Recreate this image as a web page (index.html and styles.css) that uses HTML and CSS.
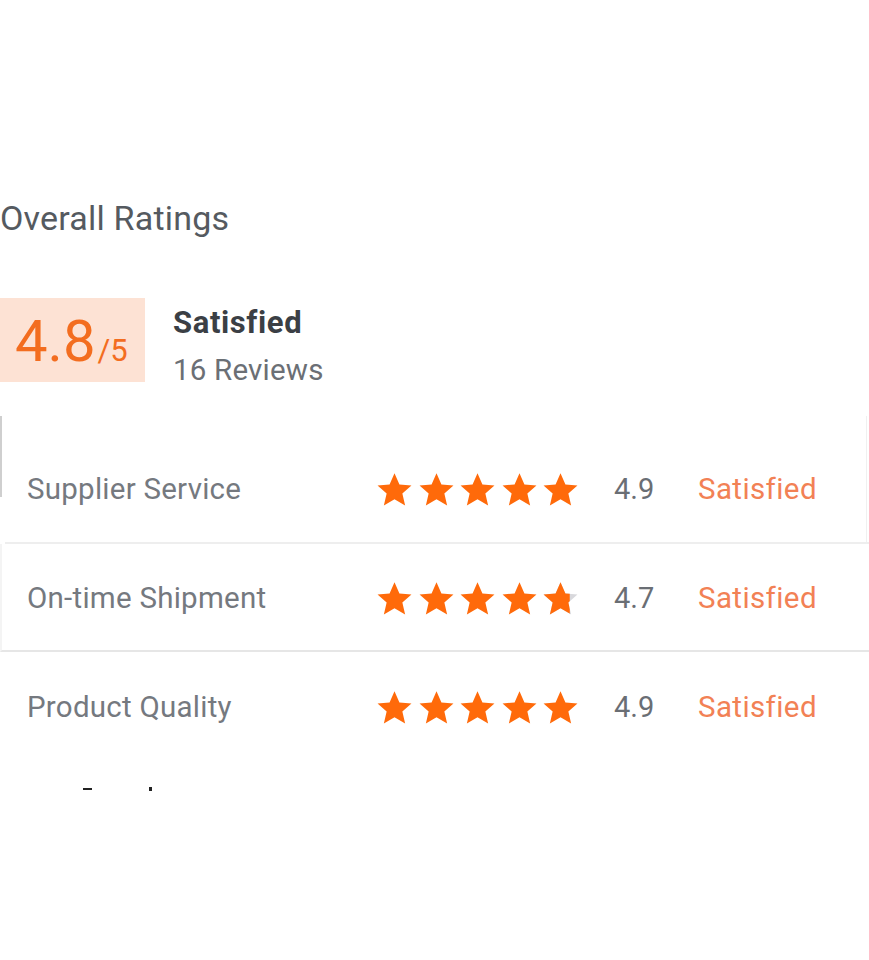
FILE: index.html
```html
<!DOCTYPE html>
<html>
<head>
<meta charset="utf-8">
<link rel="stylesheet" href="styles.css">
</head>
<body>
<div class="page">
  <h2 class="title">Overall Ratings</h2>
  <div class="summary">
    <div class="score"><span class="big">4.8</span><span class="small">/5</span></div>
    <div class="summary-text">
      <div class="sat">Satisfied</div>
      <div class="reviews">16 Reviews</div>
    </div>
  </div>
  <div class="table">
    <div class="row row1">
      <div class="label">Supplier Service</div>
      <div class="stars">
        <svg viewBox="0 0 24 24"><path d="M12 1.5l3.2 7.2 7.8.7-5.9 5.2 1.8 7.7L12 18.3l-6.9 4 1.8-7.7L1 9.4l7.8-.7z"/></svg>
        <svg viewBox="0 0 24 24"><path d="M12 1.5l3.2 7.2 7.8.7-5.9 5.2 1.8 7.7L12 18.3l-6.9 4 1.8-7.7L1 9.4l7.8-.7z"/></svg>
        <svg viewBox="0 0 24 24"><path d="M12 1.5l3.2 7.2 7.8.7-5.9 5.2 1.8 7.7L12 18.3l-6.9 4 1.8-7.7L1 9.4l7.8-.7z"/></svg>
        <svg viewBox="0 0 24 24"><path d="M12 1.5l3.2 7.2 7.8.7-5.9 5.2 1.8 7.7L12 18.3l-6.9 4 1.8-7.7L1 9.4l7.8-.7z"/></svg>
        <svg viewBox="0 0 24 24"><path d="M12 1.5l3.2 7.2 7.8.7-5.9 5.2 1.8 7.7L12 18.3l-6.9 4 1.8-7.7L1 9.4l7.8-.7z"/></svg>
      </div>
      <div class="value">4.9</div>
      <div class="status">Satisfied</div>
    </div>
    <div class="row row2">
      <div class="label">On-time Shipment</div>
      <div class="stars">
        <svg viewBox="0 0 24 24"><path d="M12 1.5l3.2 7.2 7.8.7-5.9 5.2 1.8 7.7L12 18.3l-6.9 4 1.8-7.7L1 9.4l7.8-.7z"/></svg>
        <svg viewBox="0 0 24 24"><path d="M12 1.5l3.2 7.2 7.8.7-5.9 5.2 1.8 7.7L12 18.3l-6.9 4 1.8-7.7L1 9.4l7.8-.7z"/></svg>
        <svg viewBox="0 0 24 24"><path d="M12 1.5l3.2 7.2 7.8.7-5.9 5.2 1.8 7.7L12 18.3l-6.9 4 1.8-7.7L1 9.4l7.8-.7z"/></svg>
        <svg viewBox="0 0 24 24"><path d="M12 1.5l3.2 7.2 7.8.7-5.9 5.2 1.8 7.7L12 18.3l-6.9 4 1.8-7.7L1 9.4l7.8-.7z"/></svg>
        <svg viewBox="0 0 24 24"><defs><clipPath id="part"><rect x="0" y="0" width="18" height="24"/></clipPath></defs><path class="empty" d="M12 1.5l3.2 7.2 7.8.7-5.9 5.2 1.8 7.7L12 18.3l-6.9 4 1.8-7.7L1 9.4l7.8-.7z"/><path clip-path="url(#part)" d="M12 1.5l3.2 7.2 7.8.7-5.9 5.2 1.8 7.7L12 18.3l-6.9 4 1.8-7.7L1 9.4l7.8-.7z"/></svg>
      </div>
      <div class="value">4.7</div>
      <div class="status">Satisfied</div>
    </div>
    <div class="row row3">
      <div class="label">Product Quality</div>
      <div class="stars">
        <svg viewBox="0 0 24 24"><path d="M12 1.5l3.2 7.2 7.8.7-5.9 5.2 1.8 7.7L12 18.3l-6.9 4 1.8-7.7L1 9.4l7.8-.7z"/></svg>
        <svg viewBox="0 0 24 24"><path d="M12 1.5l3.2 7.2 7.8.7-5.9 5.2 1.8 7.7L12 18.3l-6.9 4 1.8-7.7L1 9.4l7.8-.7z"/></svg>
        <svg viewBox="0 0 24 24"><path d="M12 1.5l3.2 7.2 7.8.7-5.9 5.2 1.8 7.7L12 18.3l-6.9 4 1.8-7.7L1 9.4l7.8-.7z"/></svg>
        <svg viewBox="0 0 24 24"><path d="M12 1.5l3.2 7.2 7.8.7-5.9 5.2 1.8 7.7L12 18.3l-6.9 4 1.8-7.7L1 9.4l7.8-.7z"/></svg>
        <svg viewBox="0 0 24 24"><path d="M12 1.5l3.2 7.2 7.8.7-5.9 5.2 1.8 7.7L12 18.3l-6.9 4 1.8-7.7L1 9.4l7.8-.7z"/></svg>
      </div>
      <div class="value">4.9</div>
      <div class="status">Satisfied</div>
    </div>
  </div>
  <div class="cutoff"><span class="dash"></span><span class="dot"></span></div>
</div>
</body>
</html>
```

FILE: styles.css
```css
html, body {
  margin: 0;
  padding: 0;
  background: #ffffff;
}
body {
  font-family: Roboto, "Liberation Sans", Arial, sans-serif;
  width: 869px;
  height: 960px;
  overflow: hidden;
}
.page {
  padding-top: 196px;
}
.title {
  margin: 0;
  font-weight: 400;
  font-size: 34px;
  line-height: 44px;
  color: #555a60;
  letter-spacing: 0.2px;
}
.summary {
  display: flex;
  align-items: flex-start;
  margin-top: 58px;
  gap: 28px;
}
.score {
  width: 145px;
  height: 84px;
  background: #fde2d4;
  color: #f36d1f;
  box-sizing: border-box;
  padding-left: 15px;
  padding-top: 11px;
  display: flex;
  align-items: baseline;
}
.big {
  font-size: 58px;
  line-height: 64px;
}
.small {
  font-size: 31px;
  margin-left: 2px;
}
.summary-text {
  padding-top: 7px;
}
.sat {
  font-size: 31px;
  font-weight: 700;
  color: #3b3f45;
  line-height: 36px;
  letter-spacing: 0.6px;
}
.reviews {
  font-size: 29.5px;
  color: #6b6f75;
  line-height: 36px;
  margin-top: 11px;
  letter-spacing: 0.2px;
}
.table {
  margin-top: 28px;
}
.row {
  display: flex;
  align-items: center;
  box-sizing: border-box;
}
.row1 {
  position: relative;
  height: 128px;
  padding-top: 18px;
  margin-right: 2px;
  border-right: 1px solid #f0f0f0;
}
.row1::before {
  content: "";
  position: absolute;
  left: 0;
  top: 0;
  width: 2px;
  height: 81px;
  background: #cfcfcf;
}
.row1::after {
  content: "";
  position: absolute;
  left: 5px;
  right: -3px;
  bottom: 0;
  height: 2px;
  background: #eeeeee;
}
.row2 {
  height: 108px;
  padding-top: 2px;
  border-bottom: 2px solid #e6e6e6;
  border-left: 2px solid #f4f4f4;
}
.row3 {
  height: 110px;
}
.label {
  width: 376px;
  padding-left: 27px;
  box-sizing: border-box;
  font-size: 29.5px;
  color: #75797f;
  letter-spacing: 0.25px;
}
.row2 .label {
  width: 374px;
  padding-left: 25px;
}
.stars {
  display: flex;
  gap: 4.5px;
  width: 238px;
}
.stars svg {
  width: 37px;
  height: 37px;
  fill: #ff6a0a;
}
.stars svg .empty {
  fill: #d8d8dc;
}
.value {
  width: 84px;
  font-size: 29px;
  color: #6a6e74;
}
.status {
  font-size: 29.5px;
  color: #f28155;
  letter-spacing: 0.4px;
}
.cutoff {
  position: relative;
  height: 20px;
  margin-top: 12px;
}
.dash {
  position: absolute;
  left: 83px;
  top: 14px;
  width: 9px;
  height: 2px;
  background: #222;
}
.dot {
  position: absolute;
  left: 149px;
  top: 13px;
  width: 3px;
  height: 4px;
  background: #222;
}
```
